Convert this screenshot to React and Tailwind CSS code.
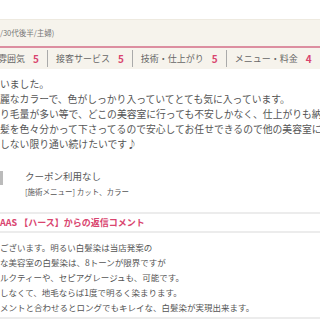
const jp = { fontFamily: '"Noto Sans CJK JP", "Noto Sans", sans-serif' };

const ratings = [
  { label: "雰囲気", score: 5 },
  { label: "接客サービス", score: 5 },
  { label: "技術・仕上がり", score: 5 },
  { label: "メニュー・料金", score: 4 },
];

const reviewLines = [
  "いました。",
  "麗なカラーで、色がしっかり入っていてとても気に入っています。",
  "り毛量が多い等で、どこの美容室に行っても不安しかなく、仕上がりも納得いく結果",
  "髪を色々分かって下さってるので安心してお任せできるので他の美容室に行けなくなりました",
  "しない限り通い続けたいです♪",
];

const replyLines = [
  "ございます。明るい白髪染は当店発案の",
  "な美容室の白髪染は、8トーンが限界ですが",
  "ルクティーや、セピアグレージュも、可能です。",
  "しなくて、地毛ならば1度で明るく染まります。",
  "メントと合わせるとロングでもキレイな、白髪染が実現出来ます。",
];

export default function App() {
  return (
    <div
      className="w-[320px] h-[320px] overflow-hidden bg-white text-[#555]"
      style={jp}
    >
      <div className="h-[19px]" />

      {/* reviewer header */}
      <div className="bg-[#f6f3ec] border-t border-[#eeeae0]">
        <div className="h-[26px] flex items-center text-[7.5px] text-[#777] whitespace-nowrap">
          /30代後半/主婦)
        </div>
        <div className="h-[2px] bg-[#dc8ea0]" />
        <div className="h-[21px] flex items-center whitespace-nowrap ml-[-2px]">
          {ratings.map((r, i) => (
            <div key={r.label} className="flex items-center">
              {i > 0 && <div className="w-px h-[17px] bg-[#aaa] mx-[8px]" />}
              <span className="text-[9px] text-[#666]">{r.label}</span>
              <span className="ml-[8px] text-[10px] font-bold text-[#d9456f]">
                {r.score}
              </span>
            </div>
          ))}
        </div>
      </div>

      {/* review body */}
      <div className="pt-[8px] text-[9.8px] leading-[15px] whitespace-nowrap">
        {reviewLines.map((l) => (
          <div key={l}>{l}</div>
        ))}
      </div>

      {/* coupon */}
      <div className="mt-[17px] flex items-start">
        <div className="w-[3px] h-[14px] bg-[#bbb] mt-[2px]" />
        <div className="ml-[22px] whitespace-nowrap">
          <div className="text-[9.5px] leading-[14px]">クーポン利用なし</div>
          <div className="text-[7.5px] leading-[14px] mt-[2px]">
            [施術メニュー] カット、カラー
          </div>
        </div>
      </div>

      {/* reply */}
      <div className="mt-[13px] border-t-2 border-[#ececec]">
        <div className="h-[19px] flex items-center text-[9px] font-bold text-[#d9456f] whitespace-nowrap border-b-2 border-[#ececec]">
          AAS 【ハース】からの返信コメント
        </div>
        <div className="pt-[7px] text-[8.5px] leading-[15px] whitespace-nowrap">
          {replyLines.map((l) => (
            <div key={l}>{l}</div>
          ))}
        </div>
        <div className="mt-[2px] h-[2px] bg-[#ececec]" />
      </div>
    </div>
  );
}
